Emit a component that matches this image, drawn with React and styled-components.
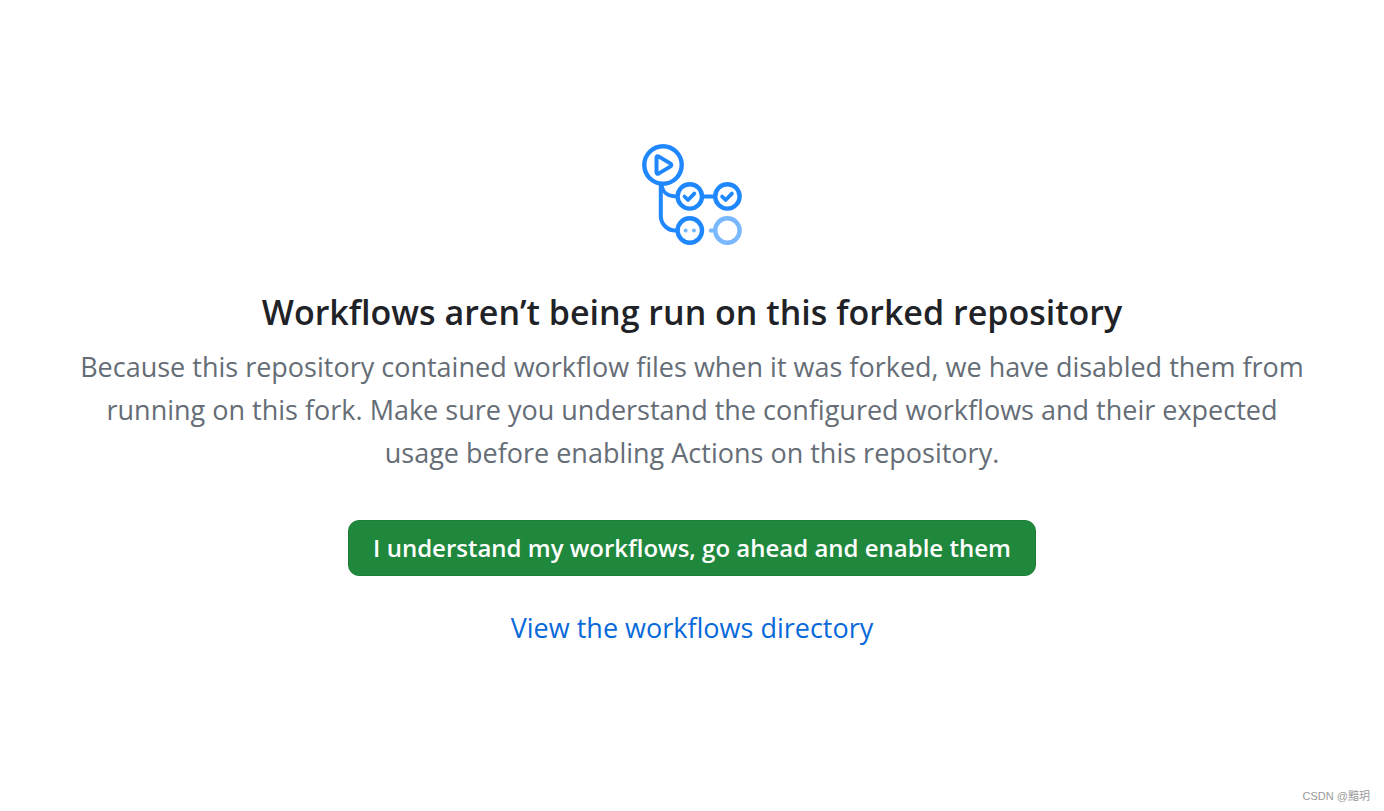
import React from "react";
import styled, { createGlobalStyle } from "styled-components";

const GlobalStyle = createGlobalStyle`
  * {
    box-sizing: border-box;
  }
  body {
    margin: 0;
    background: #ffffff;
    font-family: "Segoe UI", "Open Sans", "Noto Sans", sans-serif;
  }
`;

const WorkflowIcon = () => (
  <Icon viewBox="10 10 100 102" aria-hidden="true">
    <g
      fill="none"
      stroke="#2088ff"
      strokeWidth="4"
      strokeLinecap="round"
      strokeLinejoin="round"
    >
      <path d="M26.9 22.6 L38.2 29.4 Q40.6 31 38.2 32.6 L26.9 39.4 Q24.5 40.6 24.5 38.2 V23.8 Q24.5 21.4 26.9 22.6 Z" />
      <path d="M28.8 51 V82 A14.5 14.5 0 0 0 43.3 96.5 H44.5" />
      <path d="M29.5 51 C31 59 35 62.4 44.5 62.4" />
      <path d="M72 62.4 H81.5" />
    </g>
    <g fill="none" stroke="#2088ff" strokeWidth="4.4">
      <circle cx="31" cy="31" r="18.7" />
      <circle cx="57.8" cy="62.4" r="12.2" />
      <circle cx="95.4" cy="62.4" r="12.2" />
      <circle cx="57.8" cy="96.5" r="12.2" />
    </g>
    <g
      fill="none"
      stroke="#2088ff"
      strokeWidth="3.8"
      strokeLinecap="round"
      strokeLinejoin="round"
    >
      <path d="M52.5 62.5 L56 66 L62.3 59.6" />
      <path d="M90.1 62.5 L93.6 66 L99.9 59.6" />
    </g>
    <g fill="#79b8ff">
      <circle cx="53.6" cy="96.5" r="2" />
      <circle cx="61.9" cy="96.5" r="2" />
      <circle cx="78.8" cy="96.5" r="2" />
      <rect x="78.8" y="94.5" width="4" height="4" />
    </g>
    <circle
      cx="95.4"
      cy="96.5"
      r="12.2"
      fill="none"
      stroke="#79b8ff"
      strokeWidth="4.4"
    />
  </Icon>
);

const App = () => {
  return (
    <React.Fragment>
      <GlobalStyle />
      <Page>
        <Blankslate>
          <WorkflowIcon />
          <Title>Workflows aren’t being run on this forked repository</Title>
          <Description>
            Because this repository contained workflow files when it was forked,
            we have disabled them from running on this fork. Make sure you
            understand the configured workflows and their expected usage before
            enabling Actions on this repository.
          </Description>
          <EnableButton type="button">
            I understand my workflows, go ahead and enable them
          </EnableButton>
          <DirectoryLink href="#workflows">
            View the workflows directory
          </DirectoryLink>
        </Blankslate>
        <Watermark>CSDN @黯玥</Watermark>
      </Page>
    </React.Fragment>
  );
};

const Page = styled.div`
  min-height: 100vh;
  display: flex;
  flex-direction: column;
`;

const Blankslate = styled.main`
  flex: 1;
  display: flex;
  flex-direction: column;
  align-items: center;
  padding: 144px 72px 0;
  text-align: center;
`;

const Icon = styled.svg`
  display: block;
  width: 100px;
  height: 102px;
`;

const Title = styled.h1`
  margin: 40px 0 6px;
  font-size: 34px;
  font-weight: 600;
  line-height: 53px;
  color: #1f2328;
`;

const Description = styled.p`
  margin: 0;
  font-size: 27px;
  line-height: 43px;
  color: #656d76;
`;

const EnableButton = styled.button`
  margin: 46px 0 30px;
  height: 56px;
  padding: 0 24px;
  border: 1px solid #1d7d38;
  border-radius: 11px;
  background: #1f883d;
  color: #ffffff;
  font-family: inherit;
  font-size: 24px;
  font-weight: 600;
  line-height: 36px;
  cursor: pointer;
`;

const DirectoryLink = styled.a`
  font-size: 27px;
  line-height: 43px;
  color: #0969da;
  text-decoration: none;
  &:hover {
    text-decoration: underline;
  }
`;

const Watermark = styled.footer`
  align-self: flex-end;
  padding: 0 14px 6px;
  font-family: "Liberation Sans", "Noto Sans CJK SC", sans-serif;
  font-size: 11px;
  line-height: 18px;
  color: #999999;
`;

export default App;
